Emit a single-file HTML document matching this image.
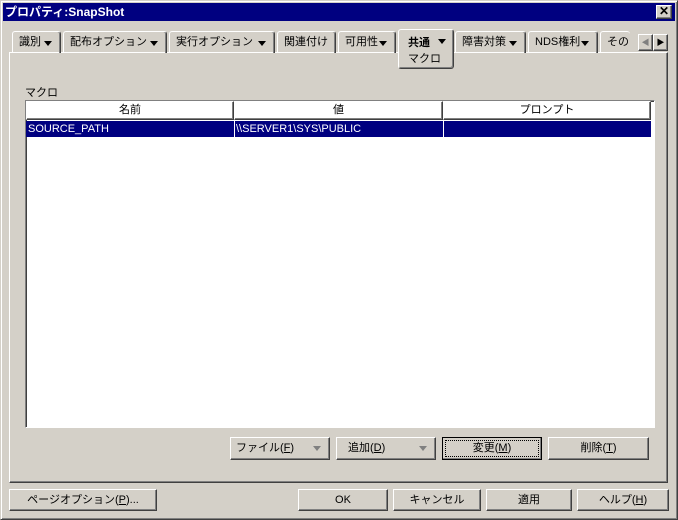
<!DOCTYPE html><html><head><meta charset="utf-8"><style>
*{margin:0;padding:0;box-sizing:border-box}
body{width:678px;height:520px;background:#d4d0c8;font-family:"Liberation Sans","Noto Sans CJK JP",sans-serif;font-size:12px;color:#000;position:relative;overflow:hidden}
.a{position:absolute}
.win{left:0;top:0;width:678px;height:520px;border:1px solid;border-color:#d4d0c8 #404040 #404040 #d4d0c8;box-shadow:inset 1px 1px #fff,inset -1px -1px #808080}
.title{left:3px;top:3px;width:672px;height:18px;background:#000080;color:#fff;font-weight:bold;font-size:12px;line-height:18px;padding-left:2px}
.btn{border:1px solid;border-color:#fff #404040 #404040 #fff;box-shadow:inset -1px -1px #808080;background:#d4d0c8;text-align:center;line-height:20px;font-size:11px}
.tab{top:31px;height:22px;border:1px solid;border-color:#fff #404040 #d4d0c8 #fff;border-bottom:none;border-radius:3px 3px 0 0;box-shadow:inset -1px 0 #808080;padding-left:6px;line-height:20px;font-size:11px;white-space:nowrap;overflow:hidden}
.tri{position:absolute;right:8px;top:9px;width:0;height:0;border-left:4px solid transparent;border-right:4px solid transparent;border-top:5px solid #000}
.th{top:101px;height:19px;border:1px solid;border-color:#fff #404040 #404040 #fff;box-shadow:inset -1px -1px #808080;text-align:center;line-height:17px;font-size:11px}
</style></head><body>
<div class="a win"></div>
<div class="a title">プロパティ:SnapShot</div>
<div class="a btn" style="left:656px;top:5px;width:16px;height:14px;line-height:11px;font-size:12px;font-weight:bold">✕</div>
<div class="a" style="left:9px;top:52px;width:659px;height:431px;border:1px solid;border-color:#fff #404040 #404040 #fff;box-shadow:inset -1px -1px #808080"></div>
<div class="a tab" style="left:12px;width:49px">識別<span class="tri"></span></div>
<div class="a tab" style="left:63px;width:104px">配布オプション<span class="tri"></span></div>
<div class="a tab" style="left:169px;width:106px">実行オプション<span class="tri"></span></div>
<div class="a tab" style="left:277px;width:59px">関連付け</div>
<div class="a tab" style="left:338px;width:58px">可用性<span class="tri"></span></div>
<div class="a tab" style="left:455px;width:71px">障害対策<span class="tri"></span></div>
<div class="a tab" style="left:528px;width:70px">NDS権利<span class="tri"></span></div>
<div class="a tab" style="left:600px;width:30px;border-right:none;box-shadow:none">その</div>
<div class="a" style="left:398px;top:29px;width:56px;height:40px;border:1px solid;border-color:#fff #404040 #404040 #fff;border-radius:3px;background:#d4d0c8;box-shadow:inset -1px -1px #808080;font-size:11px">
<b class="a" style="left:9px;top:4px">共通</b><span class="tri" style="top:9px;right:7px"></span>
<span class="a" style="left:9px;top:20px">マクロ</span></div>
<div class="a btn" style="left:638px;top:34px;width:15px;height:17px;line-height:15px;font-size:8px;color:#808080">◀</div>
<div class="a btn" style="left:653px;top:34px;width:15px;height:17px;line-height:15px;font-size:8px">▶</div>
<div class="a" style="left:25px;top:84px;font-size:11px">マクロ</div>
<div class="a" style="left:25px;top:100px;width:630px;height:328px;background:#fff;border:1px solid;border-color:#808080 #fff #fff #808080;box-shadow:inset 1px 1px #404040"></div>
<div class="a th" style="left:26px;width:208px">名前</div>
<div class="a th" style="left:234px;width:209px">値</div>
<div class="a th" style="left:443px;width:208px">プロンプト</div>
<div class="a" style="left:26px;top:121px;width:625px;height:16px;background:#000080;color:#fff;font-size:11px;line-height:16px">
<span class="a" style="left:2px">SOURCE_PATH</span>
<span class="a" style="left:208px;top:0;height:16px;border-left:1px solid #fff"></span>
<span class="a" style="left:210px">\\SERVER1\SYS\PUBLIC</span>
<span class="a" style="left:417px;top:0;height:16px;border-left:1px solid #fff"></span>
</div>
<div class="a btn" style="left:230px;top:437px;width:100px;height:23px;text-align:left;padding-left:5px">ファイル(<u>F</u>)<span class="a" style="right:8px;top:8px;border-left:4px solid transparent;border-right:4px solid transparent;border-top:5px solid #808080"></span></div>
<div class="a btn" style="left:336px;top:437px;width:100px;height:23px;text-align:left;padding-left:11px">追加(<u>D</u>)<span class="a" style="right:8px;top:8px;border-left:4px solid transparent;border-right:4px solid transparent;border-top:5px solid #808080"></span></div>
<div class="a btn" style="left:442px;top:437px;width:100px;height:23px;border-color:#000;outline:1px dotted #000;outline-offset:-4px">変更(<u>M</u>)</div>
<div class="a btn" style="left:548px;top:437px;width:101px;height:23px">削除(<u>T</u>)</div>
<div class="a btn" style="left:9px;top:489px;width:148px;height:22px">ページオプション(<u>P</u>)...</div>
<div class="a btn" style="left:298px;top:489px;width:90px;height:22px">OK</div>
<div class="a btn" style="left:393px;top:489px;width:88px;height:22px">キャンセル</div>
<div class="a btn" style="left:486px;top:489px;width:86px;height:22px">適用</div>
<div class="a btn" style="left:577px;top:489px;width:92px;height:22px">ヘルプ(<u>H</u>)</div>
</body></html>
